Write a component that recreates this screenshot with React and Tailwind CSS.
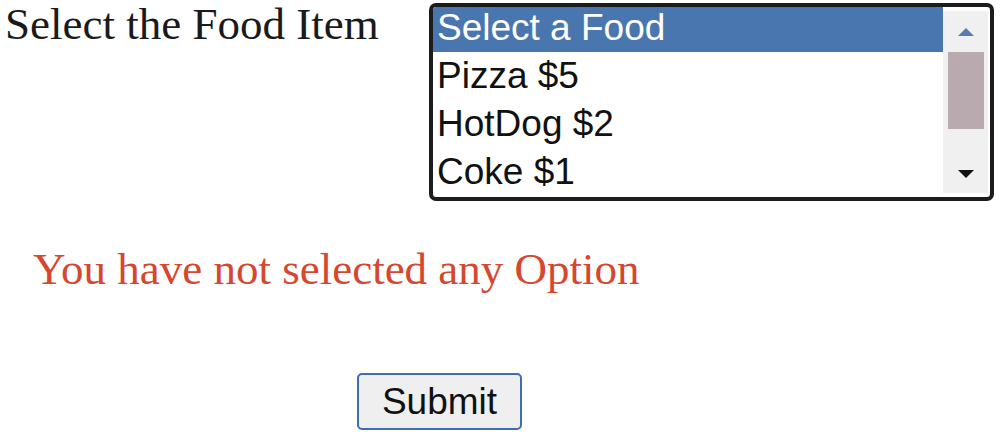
import React, { useState } from 'react';

const foods = ['Select a Food', 'Pizza $5', 'HotDog $2', 'Coke $1'];

const FoodList = ({ selected, setSelected }) => (
  <div className="flex w-[565px] h-[198px] border-[4px] border-[#1c1c1c] rounded-[7px] bg-white overflow-hidden">
    <div className="flex-1 overflow-hidden" style={{ fontFamily: '"Liberation Sans", Arial, sans-serif' }}>
      <div className="mt-[-3px]">
        {foods.map((f, i) => (
          <div
            key={f}
            onClick={() => setSelected(i)}
            className={
              'h-[48px] pl-[4px] text-[37px] leading-[48px] ' +
              (selected === i ? 'bg-[#4a76b0] text-white' : 'text-[#111]')
            }
          >
            {f}
          </div>
        ))}
      </div>
    </div>
    {/* scrollbar */}
    <div className="w-[45px] bg-[#f0f0f0] flex flex-col items-center mt-[4px] mb-[4px] mr-[2px]">
      <div className="h-[41px] flex items-center justify-center">
        <svg width="18" height="10" viewBox="0 0 18 10">
          <path d="M9 1 L17 9 L1 9 Z" fill="#5b7ab0" />
        </svg>
      </div>
      <div className="w-[36px] h-[77px] bg-[#b9aab0]" />
      <div className="flex-1 flex items-end justify-center pb-[14px]">
        <svg width="18" height="10" viewBox="0 0 18 10">
          <path d="M1 1 L17 1 L9 9 Z" fill="#111" />
        </svg>
      </div>
    </div>
  </div>
);

export default function App() {
  const [selected, setSelected] = useState(0);
  return (
    <div className="w-[1000px] h-[435px] bg-white overflow-hidden relative">
      <div className="flex items-start pt-[3px]">
        <div
          className="ml-[5px] mt-[-1px] text-[45px] leading-[45px] text-[#1a1a1a] w-[424px]"
          style={{ fontFamily: '"Liberation Serif", "Times New Roman", serif' }}
        >
          Select the Food Item
        </div>
        <FoodList selected={selected} setSelected={setSelected} />
      </div>
      <p
        className="ml-[33px] mt-[46px] text-[45px] leading-[45px] text-[#d5472f]"
        style={{ fontFamily: '"Liberation Serif", "Times New Roman", serif' }}
      >
        {selected === 0 ? 'You have not selected any Option' : 'You selected ' + foods[selected]}
      </p>
      <div className="ml-[357px] mt-[81px]">
        <button
          className="w-[165px] h-[57px] border-[2px] border-[#3d6db3] rounded-[5px] bg-[#efefef] text-[37px] leading-none text-[#111]"
          style={{ fontFamily: '"Liberation Sans", Arial, sans-serif' }}
        >
          Submit
        </button>
      </div>
    </div>
  );
}
